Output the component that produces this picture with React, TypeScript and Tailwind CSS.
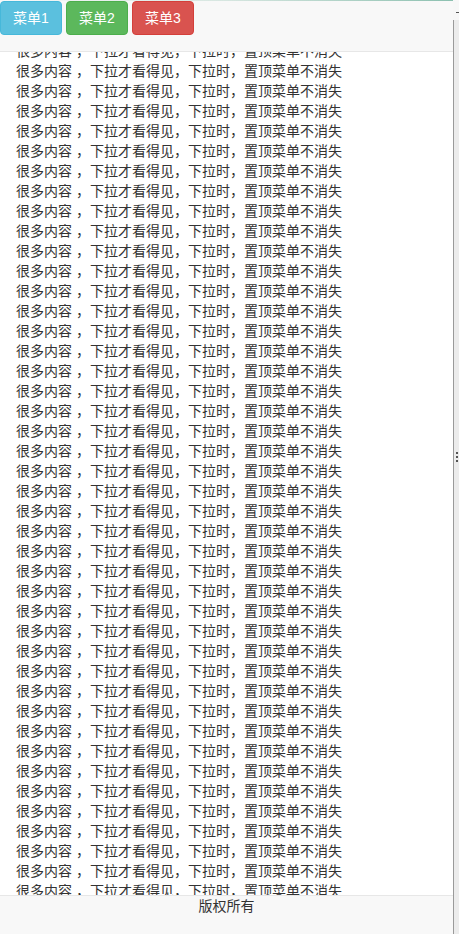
const menus = [
  { label: "菜单1", cls: "bg-[#5bc0de] border-[#46b8da]" },
  { label: "菜单2", cls: "bg-[#5cb85c] border-[#4cae4c]" },
  { label: "菜单3", cls: "bg-[#d9534f] border-[#d43f3a]" },
];

const lines = Array.from({ length: 43 }, (_, i) => i);

export default function App() {
  return (
    <div
      className="flex h-[934px] w-[459px] overflow-hidden bg-white text-[14px] leading-[20px] text-[#333]"
      style={{ fontFamily: "'Liberation Sans', 'Noto Sans CJK SC', sans-serif" }}
    >
      {/* page */}
      <div className="relative h-full w-[453px] overflow-hidden">
        <div className="px-[16px] pt-[41px]">
          {lines.map((i) => (
            <div key={i} className="whitespace-nowrap">
              很多内容 ，下拉才看得见，下拉时，置顶菜单不消失
            </div>
          ))}
        </div>

        {/* fixed top menu */}
        <div className="absolute inset-x-0 top-0 h-[52px] border-b border-[#e7e7e7] bg-[#f8f8f8]">
          <div className="h-px bg-gradient-to-r from-transparent via-[#d6e6e0] to-[#8cc0b0]" />
          <div className="flex gap-[4px]">
            {menus.map((m) => (
              <button
                key={m.label}
                className={`h-[34px] w-[62px] rounded-[4px] border text-[14px] text-white ${m.cls}`}
              >
                {m.label}
              </button>
            ))}
          </div>
        </div>

        {/* fixed footer */}
        <div className="absolute inset-x-0 bottom-0 h-[39px] border-t border-[#e7e7e7] bg-[#f8f8f8] text-center">
          版权所有
        </div>
      </div>

      {/* side splitter */}
      <div className="flex h-full w-[6px] flex-col bg-[#f3f3f3]">
        <div className="relative h-[20px] bg-[#f7f7f7]">
          <div className="absolute left-[3px] top-[12px] h-px w-[3px] bg-[#555]" />
        </div>
        <div className="flex flex-1 flex-col items-end justify-center border-l border-[#9a9a9a] bg-[#ececec] pb-[40px]">
          <div className="flex flex-col gap-[2px] pr-[1px]">
            <div className="h-[2px] w-[2px] bg-[#555]" />
            <div className="h-[2px] w-[2px] bg-[#555]" />
            <div className="h-[2px] w-[2px] bg-[#555]" />
          </div>
        </div>
      </div>
    </div>
  );
}
